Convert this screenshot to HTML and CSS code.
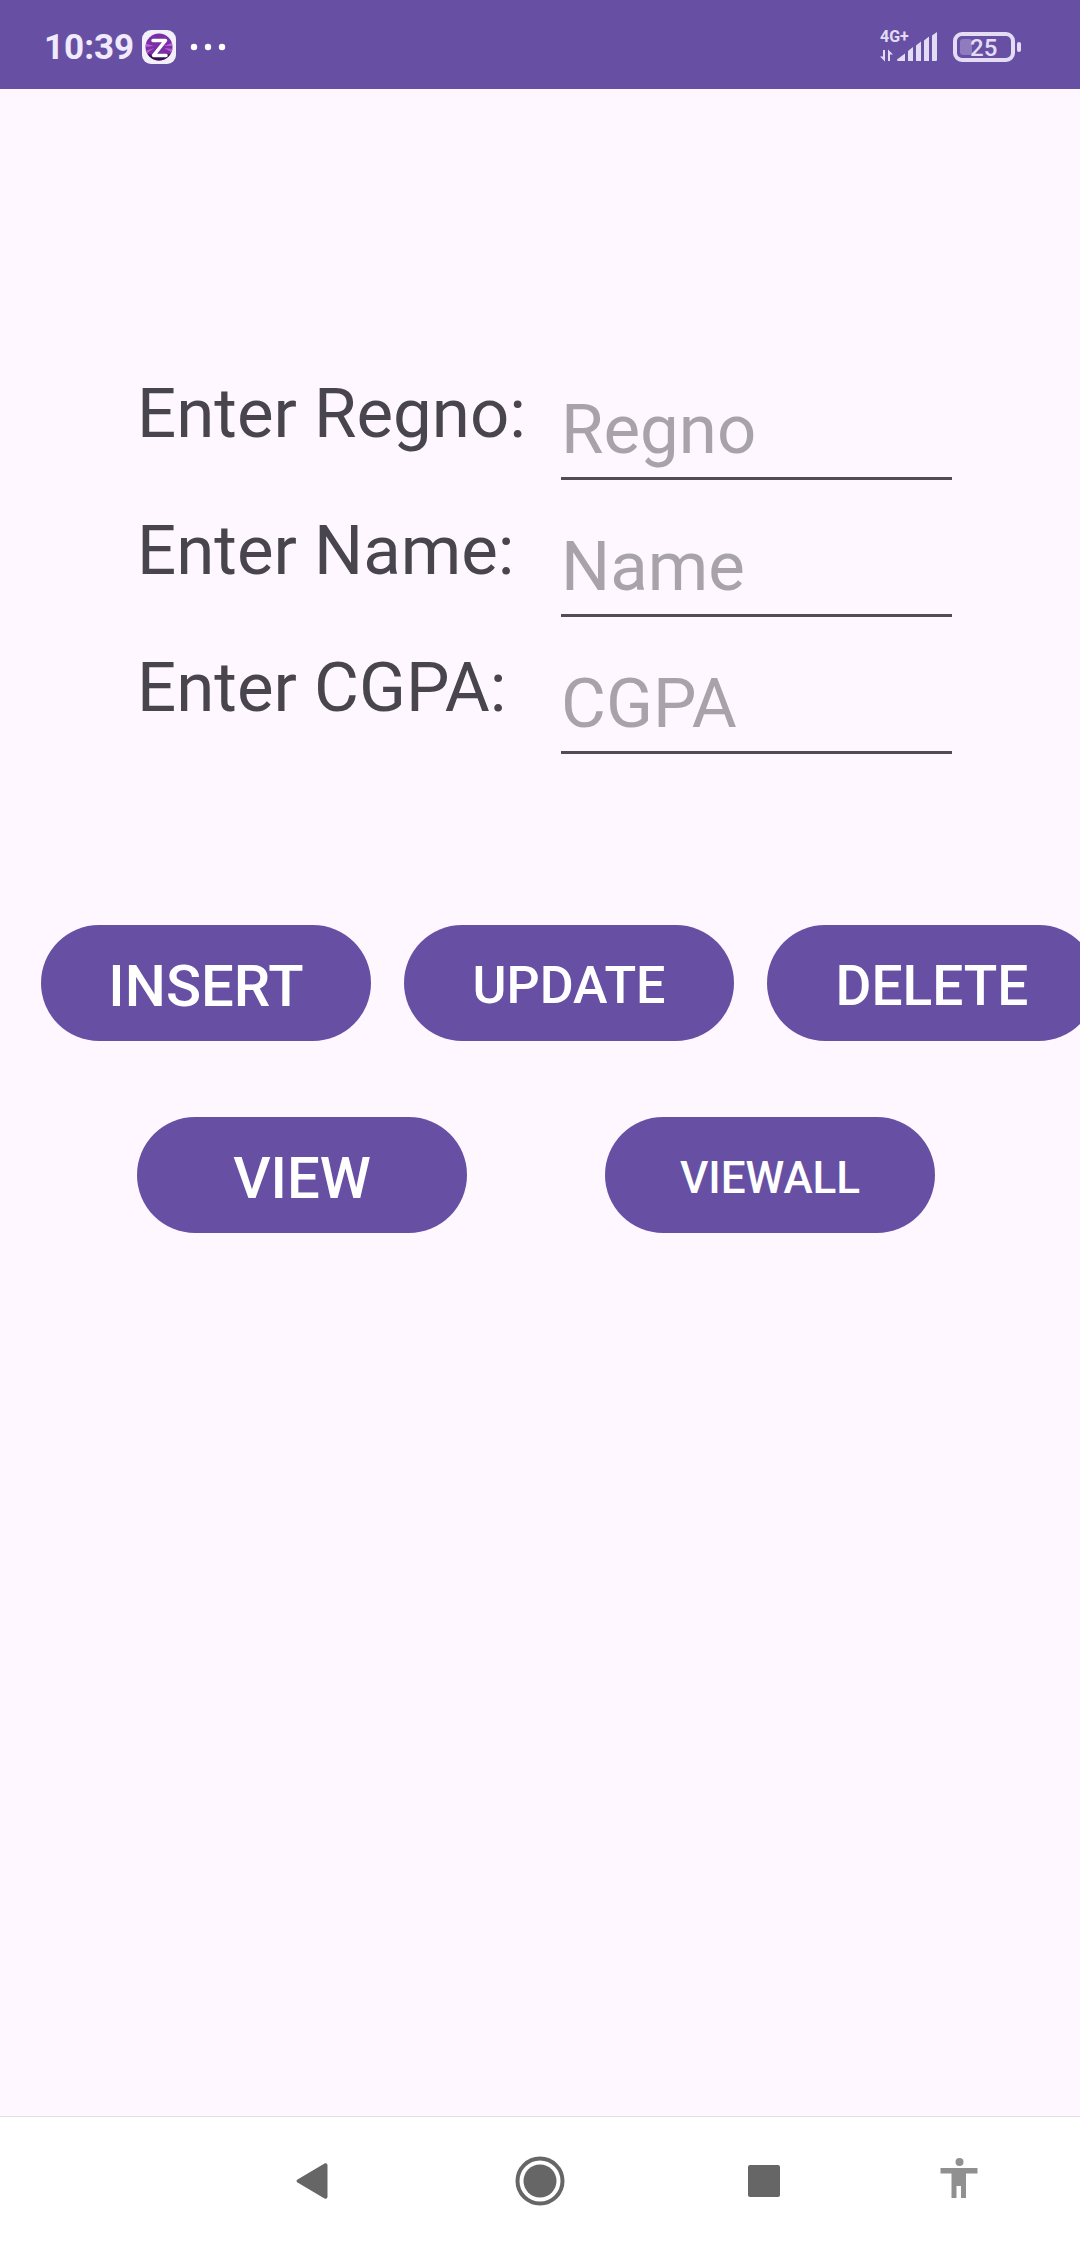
FILE: index.html
```html
<!DOCTYPE html>
<html lang="en">
<head>
<meta charset="utf-8">
<meta name="viewport" content="width=device-width, initial-scale=1">
<title>Student Records</title>
<link rel="stylesheet" href="styles.css">
</head>
<body>
<header class="status">
  <div class="status-left">
    <span class="clock">10:39</span>
    <svg class="app-badge" width="34" height="34" viewBox="0 0 34 34" aria-hidden="true">
      <defs><clipPath id="disc"><circle cx="17" cy="17" r="13.5"/></clipPath></defs>
      <rect width="34" height="34" rx="9" fill="#f4f0fa"/>
      <g clip-path="url(#disc)">
        <rect width="34" height="34" fill="#7a2fa6"/>
        <path d="M2 13l10 3-9 1zM3 21l9-3-8 6zM32 12l-10 4 10 0zM32 19l-10-1 9 5z" fill="#b45fd6"/>
        <path d="M3 23q14 5 28 0v9H3z" fill="#35104f"/>
      </g>
      <path d="M11 10.500H23.500L11.500 25.500H24" fill="none" stroke="#fff" stroke-width="3.500" stroke-linejoin="round" stroke-linecap="round"/>
    </svg>
    <svg class="more" width="36" height="8" viewBox="0 0 36 8" fill="#fff" aria-hidden="true">
      <circle cx="4" cy="4" r="3.200"/><circle cx="18" cy="4" r="3.200"/><circle cx="32" cy="4" r="3.200"/>
    </svg>
  </div>
  <div class="status-right">
    <div class="signal">
      <span class="network">4G+</span>
      <svg class="bars" width="57" height="30" viewBox="0 0 57 30" fill="#e4dcf5" aria-hidden="true">
        <path d="M3 18h2v11.500L0 24.500h3zM8 29V17.500l5 5h-3V29z"/>
        <path d="M17 27.500l8-6V29h-7q-1 0-1-1.500zM28 19l5-4v14h-5zM36 13.500l5-4V29h-5zM44 8.500l5-4V29h-5zM52 3.500l5-3.500v28q0 1-1 1h-4z"/>
      </svg>
    </div>
    <div class="battery">
      <svg width="68" height="30" viewBox="0 0 68 30" aria-hidden="true">
        <rect x="2" y="2" width="58" height="26" rx="7" fill="none" stroke="#e4dcf5" stroke-width="4"/>
        <rect x="7" y="7" width="12" height="16" rx="3" fill="#8f7bbd"/>
        <rect x="64" y="10" width="4" height="10" rx="2" fill="#e4dcf5"/>
      </svg>
      <span class="level">25</span>
    </div>
  </div>
</header>

<main class="screen">
  <form class="record" onsubmit="return false">
    <div class="field"><label for="regno">Enter Regno:</label><input id="regno" type="text" placeholder="Regno"></div>
    <div class="field"><label for="name">Enter Name:</label><input id="name" type="text" placeholder="Name"></div>
    <div class="field"><label for="cgpa">Enter CGPA:</label><input id="cgpa" type="text" placeholder="CGPA"></div>
  </form>
  <div class="actions">
    <button type="button" class="btn btn-xl">INSERT</button>
    <button type="button" class="btn btn-md">UPDATE</button>
    <button type="button" class="btn btn-lg">DELETE</button>
  </div>
  <div class="actions actions-view">
    <button type="button" class="btn btn-xl">VIEW</button>
    <button type="button" class="btn btn-sm">VIEWALL</button>
  </div>
</main>

<nav class="navbar">
  <button type="button" class="nav-btn nav-back" aria-label="Back">
    <svg width="32" height="36" viewBox="0 0 32 36"><path d="M1.500 16.500L28.500.600Q31.500-.500 31.500 2.500V33.500Q31.500 36.500 28.500 35.400L1.500 19.500Q-.500 18 1.500 16.500z" fill="#666"/></svg>
  </button>
  <button type="button" class="nav-btn" aria-label="Home">
    <svg width="50" height="50" viewBox="0 0 50 50"><circle cx="25" cy="25" r="22.500" fill="none" stroke="#666" stroke-width="4"/><circle cx="25" cy="25" r="16.500" fill="#666"/></svg>
  </button>
  <button type="button" class="nav-btn" aria-label="Recent apps">
    <svg width="32" height="32" viewBox="0 0 32 32"><rect width="32" height="32" rx="2" fill="#666"/></svg>
  </button>
  <button type="button" class="nav-btn nav-access" aria-label="Accessibility">
    <svg width="38" height="46" viewBox="0 0 38 46" fill="#909090"><circle cx="19.500" cy="4" r="4"/><path d="M.500 10h37v5.500H26V40h-5V28h-4.500v12h-5V15.500H.500z"/></svg>
  </button>
</nav>
</body>
</html>
```
FILE: styles.css
```css
* { box-sizing: border-box; }

body {
  margin: 0;
  min-height: 100vh;
  display: flex;
  flex-direction: column;
  background: #fef7ff;
  color: #49454f;
  font-family: Roboto, "Liberation Sans", sans-serif;
}

svg { display: block; }

/* Status bar */
.status {
  display: flex;
  justify-content: space-between;
  align-items: center;
  padding: 28px 59px 23px 44px;
  background: #6750a3;
  color: #f0eafc;
}
.status-left,
.status-right { display: flex; align-items: center; }
.clock {
  padding-top: 2px;
  font-size: 35px;
  line-height: 36px;
  font-weight: 700;
}
.app-badge { margin-left: 8px; }
.more { margin-left: 14px; }
.status-right { gap: 16px; color: #e4dcf5; }
.signal { position: relative; }
.network {
  position: absolute;
  top: -3px;
  left: 0;
  font-size: 16px;
  line-height: 16px;
  font-weight: 700;
}
.battery { position: relative; }
.level {
  position: absolute;
  inset: 0 0 0 17px;
  font-size: 24px;
  line-height: 32px;
  font-weight: 500;
}

/* Record form */
.screen {
  flex: 1;
  padding-top: 284px;
  overflow: hidden;
}
.record {
  display: flex;
  flex-direction: column;
  gap: 30px;
  padding: 0 128px 0 137px;
}
.field {
  display: grid;
  grid-template-columns: 424px 1fr;
  align-items: start;
  font-size: 69px;
  line-height: 82px;
}
.field input {
  width: 100%;
  height: 107px;
  padding: 15px 0 7px;
  border: 0;
  border-bottom: 3px solid #514c56;
  border-radius: 0;
  outline: 0;
  background: transparent;
  color: inherit;
  font: inherit;
}
.field input::placeholder { color: #a8a3aa; opacity: 1; }

/* Action buttons */
.actions {
  display: flex;
  gap: 33px;
  margin-top: 171px;
  padding-left: 41px;
}
.actions-view {
  gap: 138px;
  margin-top: 76px;
  padding-left: 137px;
}
.btn {
  flex: none;
  width: 330px;
  height: 116px;
  padding: 5px 0 0;
  border: 0;
  border-radius: 58px;
  background: #6750a3;
  color: #fff;
  font-family: inherit;
  font-weight: 500;
}
.btn-xl { font-size: 58px; }
.btn-lg { font-size: 55px; }
.btn-md { font-size: 52px; }
.btn-sm { font-size: 44px; }

/* System navigation */
.navbar {
  display: grid;
  grid-template-columns: 226fr 230fr 218fr 172fr;
  padding: 0 35px 2px 199px;
  height: 130px;
  border-top: 1px solid #e0dfe1;
  background: #fff;
}
.nav-btn {
  display: flex;
  justify-content: center;
  align-items: center;
  padding: 0;
  border: 0;
  background: transparent;
}
```
